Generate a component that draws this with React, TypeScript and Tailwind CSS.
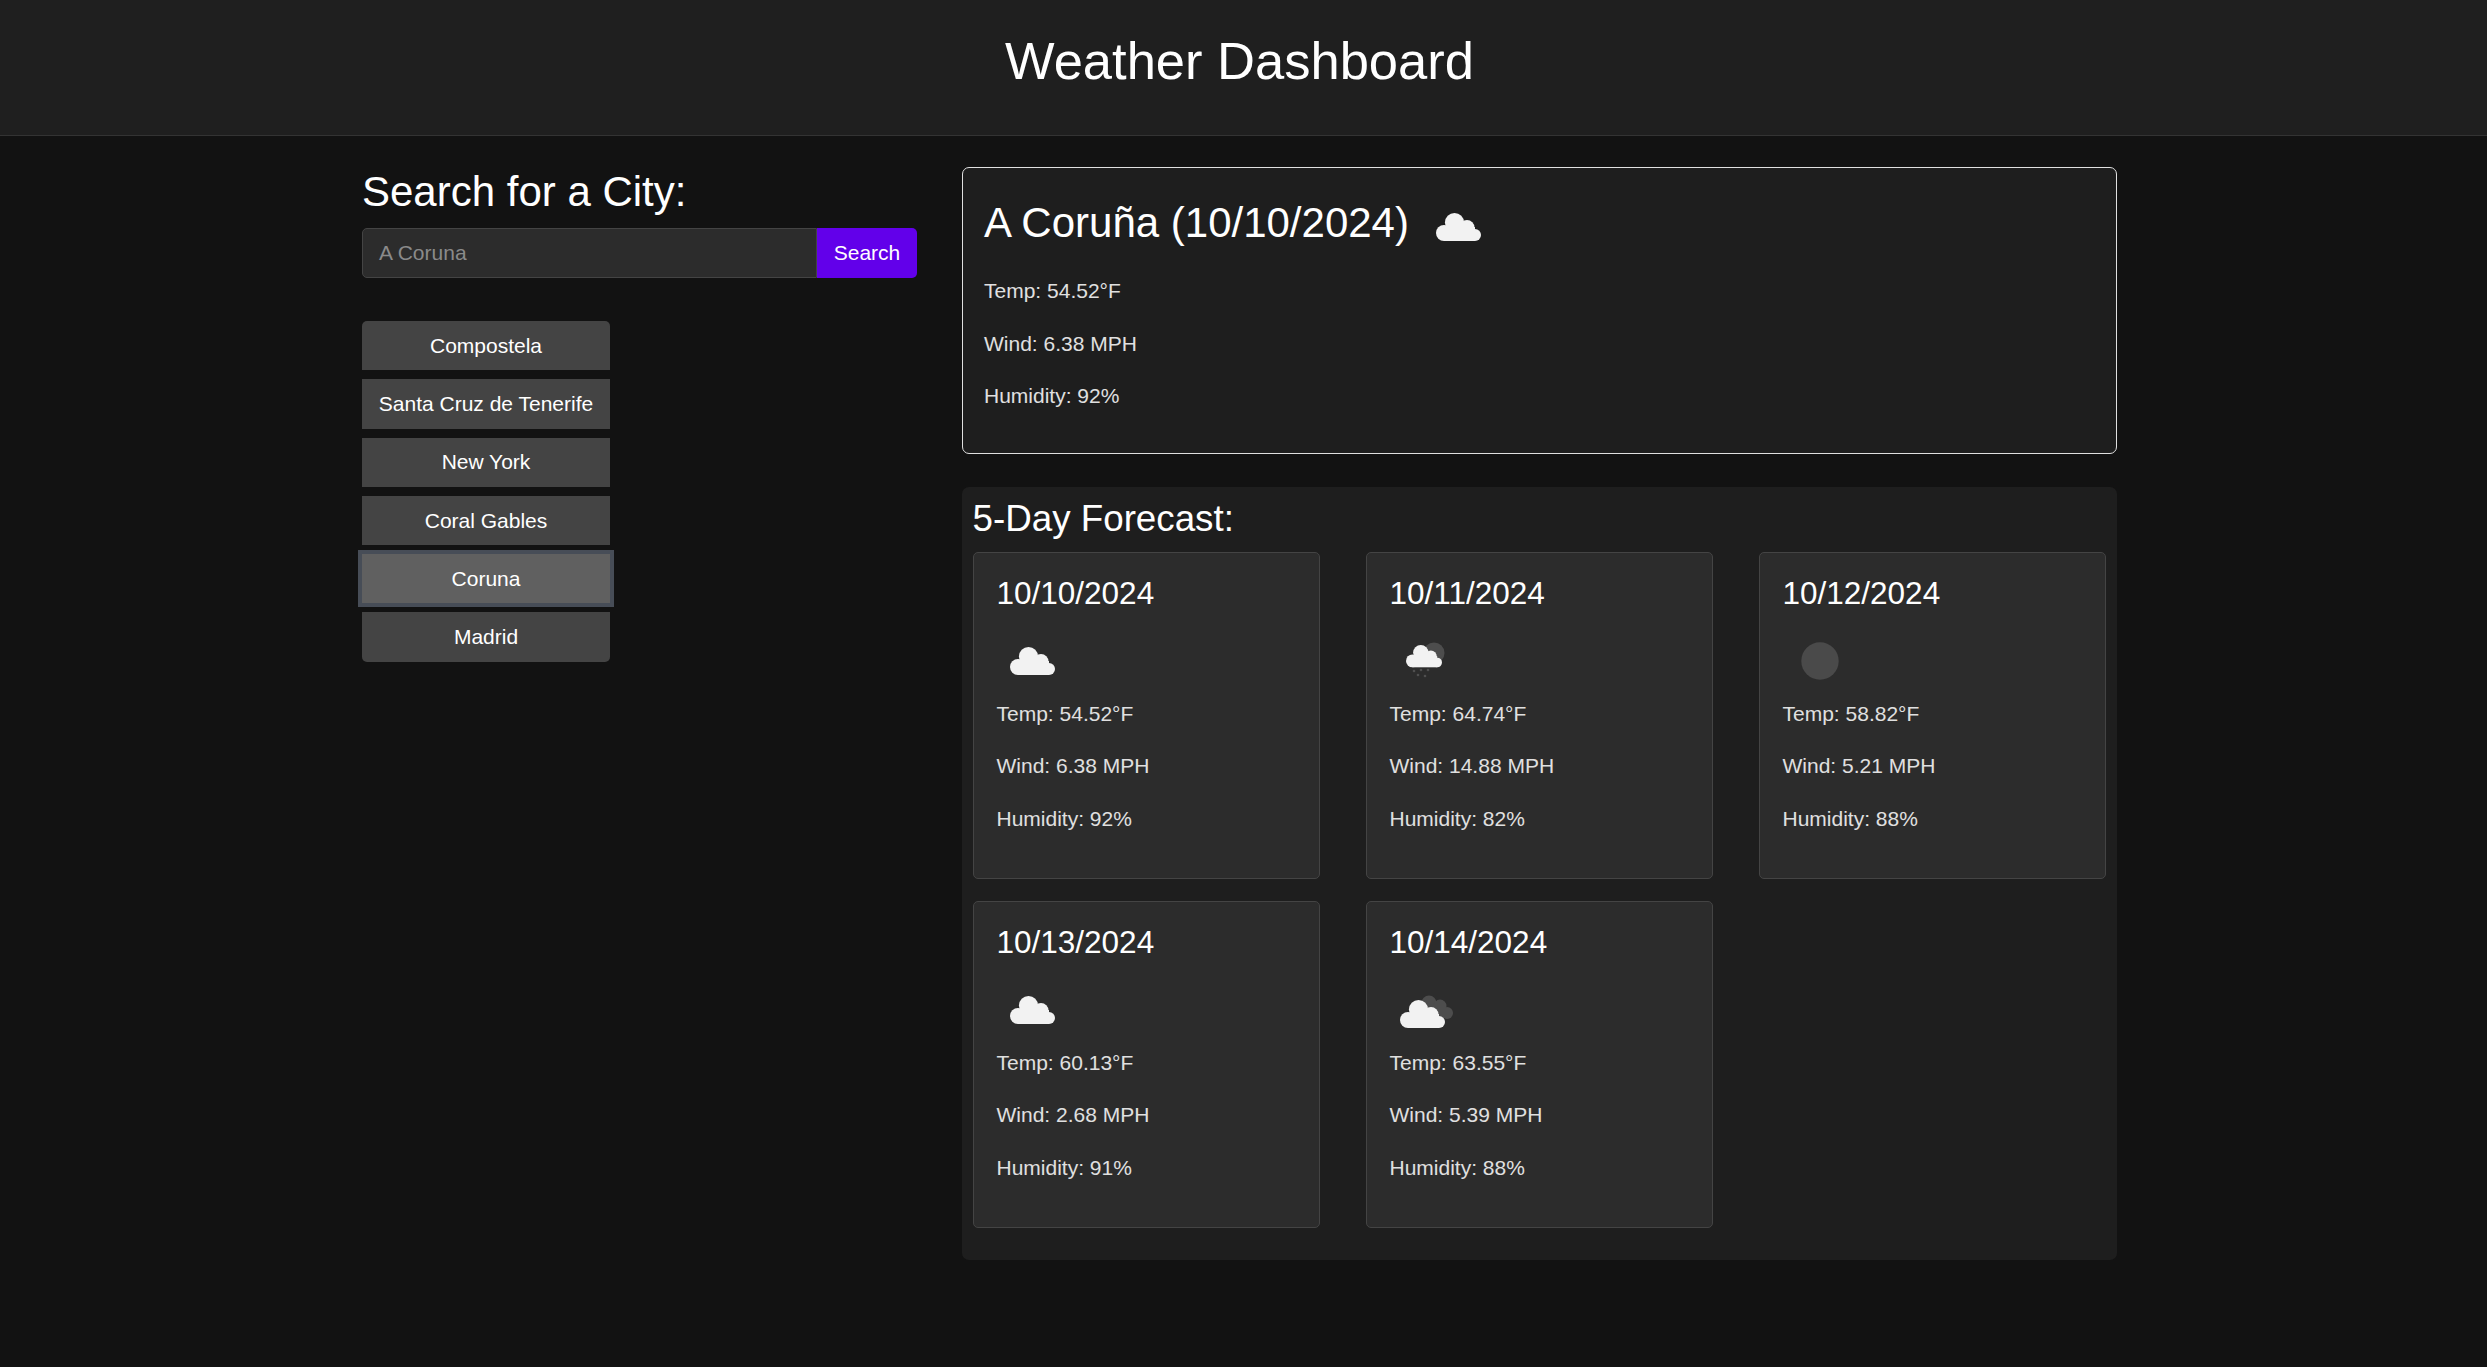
const cities = ["Compostela", "Santa Cruz de Tenerife", "New York", "Coral Gables", "Coruna", "Madrid"];

const forecast = [
  { date: "10/10/2024", icon: "cloud", temp: "54.52", wind: "6.38", humidity: "92" },
  { date: "10/11/2024", icon: "rain", temp: "64.74", wind: "14.88", humidity: "82" },
  { date: "10/12/2024", icon: "clear", temp: "58.82", wind: "5.21", humidity: "88" },
  { date: "10/13/2024", icon: "cloud", temp: "60.13", wind: "2.68", humidity: "91" },
  { date: "10/14/2024", icon: "broken", temp: "63.55", wind: "5.39", humidity: "88" },
];

function CloudShape({ fill = "#f2f2f2" }: { fill?: string }) {
  return (
    <g fill={fill}>
      <circle cx="33.5" cy="28.6" r="9.6" />
      <circle cx="46" cy="33.5" r="7.5" />
      <circle cx="23" cy="39" r="8" />
      <circle cx="54" cy="41" r="6" />
      <rect x="23" y="33" width="31" height="14" />
    </g>
  );
}

// openweather style icons, 66px box
function WeatherIcon({ kind }: { kind: string }) {
  return (
    <svg viewBox="0 0 66 66" className="h-[66px] w-[66px] shrink-0 blur-[0.4px]">
      {kind === "cloud" && <CloudShape />}
      {kind === "rain" && (
        <>
          <circle cx="46" cy="25" r="10.5" fill="#4d4d4d" />
          <g fill="#4f4f4f">
            <circle cx="26" cy="43" r="1.3" />
            <circle cx="33" cy="42" r="1.3" />
            <circle cx="40" cy="42" r="1.3" />
            <circle cx="30" cy="47" r="1.3" />
            <circle cx="37" cy="48" r="1.3" />
          </g>
          <g transform="translate(6 1.7) scale(0.8)">
            <CloudShape />
          </g>
        </>
      )}
      {kind === "clear" && <circle cx="39" cy="33" r="18.7" fill="#4a4a4a" />}
      {kind === "broken" && (
        <>
          <g fill="#4d4d4d">
            <circle cx="41" cy="26" r="7.5" />
            <circle cx="52" cy="29" r="6.5" />
            <circle cx="59" cy="36" r="6" />
            <rect x="44" y="28" width="12" height="12" />
          </g>
          <g transform="translate(-3 4)">
            <CloudShape />
          </g>
        </>
      )}
    </svg>
  );
}

function Stats({ temp, wind, humidity }: { temp: string; wind: string; humidity: string }) {
  return (
    <div className="text-[21px] leading-[31.5px] text-[#e0e0e0]">
      <p className="mb-[21px]">Temp: {temp}°F</p>
      <p className="mb-[21px]">Wind: {wind} MPH</p>
      <p className="mb-[21px]">Humidity: {humidity}%</p>
    </div>
  );
}

export default function App() {
  return (
    <div className="min-h-screen bg-[#121212] font-['Liberation_Sans',Arial,sans-serif] text-white">
      <header className="h-[136px] border-b border-[#333333] bg-[#1f1f1f] pr-2 pt-[29px] text-center">
        <h1 className="text-[52.5px] leading-[63px]">Weather Dashboard</h1>
      </header>

      <main className="flex pl-[362px] pt-[31px]">
        <aside className="w-[555px]">
          <h2 className="mb-[10.5px] text-[42px] leading-[50.4px]">Search for a City:</h2>
          <div className="flex h-[50px]">
            <div className="flex min-w-0 flex-1 items-center rounded-l-[5px] border border-[#444444] bg-[#2c2c2c] px-[16px] text-[21px] text-[#8a8a8a]">
              A Coruna
            </div>
            <button className="w-[100px] rounded-r-[5px] bg-[#6200ea] text-[21px] text-white">Search</button>
          </div>

          <div className="mt-[43px] flex w-[248px] flex-col gap-[9px]">
            {cities.map((city, i) => (
              <button
                key={city}
                className={`h-[49.3px] text-center text-[21px] text-white ${
                  city === "Coruna" ? "bg-[#606060] outline-[4px] outline-[#474d57]" : "bg-[#444444]"
                } ${i === 0 ? "rounded-t-[5px]" : ""} ${i === cities.length - 1 ? "rounded-b-[5px]" : ""}`}
              >
                {city}
              </button>
            ))}
          </div>
        </aside>

        <section className="ml-[45px] w-[1155px]">
          <div className="rounded-[7px] border border-[#e0e0e0] bg-[#1e1e1e] px-[21px] pb-[20px] pt-[21px]">
            <div className="mb-[10.5px] flex h-[75.5px] items-center">
              <h2 className="mb-[7px] text-[42px] leading-[50.4px]">A Coruña (10/10/2024)</h2>
              <span className="ml-[12px]">
                <WeatherIcon kind="cloud" />
              </span>
            </div>
            <Stats temp="54.52" wind="6.38" humidity="92" />
          </div>

          <div className="mt-[33px] rounded-[7px] bg-[#1e1e1e] px-[10.5px] pb-[32px] pt-[10.5px]">
            <h3 className="mb-[10.5px] text-[36.75px] leading-[44.1px]">5-Day Forecast:</h3>
            <div className="grid grid-cols-[repeat(3,347px)] gap-x-[46px] gap-y-[22px]">
              {forecast.map((day) => (
                <div key={day.date} className="rounded-[5px] border border-[#444444] bg-[#2c2c2c] px-[23px] pb-[22.5px] pt-[22px]">
                  <h4 className="mb-[10.5px] text-[31.5px] leading-[37.8px]">{day.date}</h4>
                  <div className="-ml-[1.5px] h-[74.7px] pt-[4.7px]">
                    <WeatherIcon kind={day.icon} />
                  </div>
                  <Stats temp={day.temp} wind={day.wind} humidity={day.humidity} />
                </div>
              ))}
            </div>
          </div>
        </section>
      </main>
    </div>
  );
}
